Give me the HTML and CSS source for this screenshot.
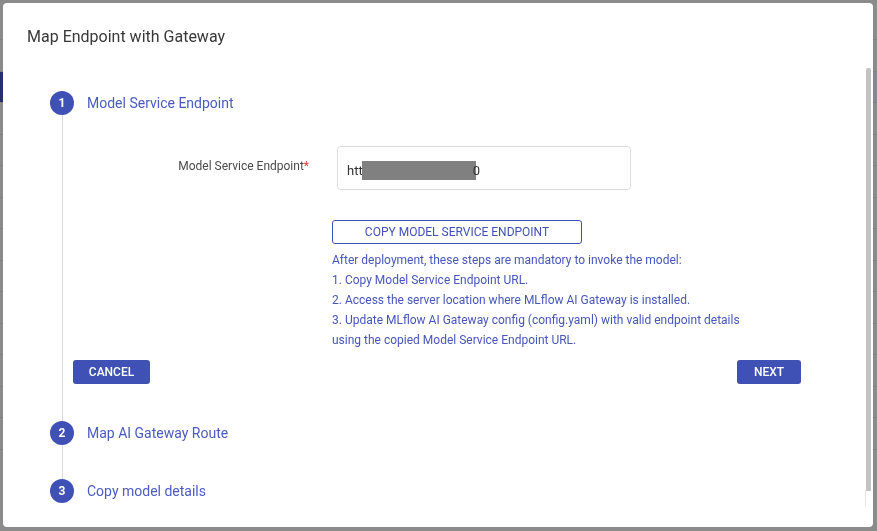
FILE: index.html
```html
<!DOCTYPE html>
<html lang="en">
<head>
<meta charset="utf-8">
<title>Map Endpoint with Gateway</title>
<link rel="stylesheet" href="styles.css">
</head>
<body>
<div class="page">
  <div class="page-top"></div>
  <div class="page-row"></div>
  <div class="page-row active"></div>
  <div class="page-row"></div>
  <div class="page-row"></div>
  <div class="page-row"></div>
  <div class="page-row"></div>
  <div class="page-row"></div>
  <div class="page-row"></div>
  <div class="page-row"></div>
  <div class="page-row"></div>
  <div class="page-row"></div>
  <div class="page-row"></div>
  <div class="page-row"></div>
</div>

<div class="dialog">
  <h2 class="title">Map Endpoint with Gateway</h2>
  <div class="stepper">
    <div class="step-head">
      <span class="step-num">1</span>
      <span class="step-label">Model Service Endpoint</span>
    </div>
    <div class="step-body">
      <div class="form-row">
        <label class="form-label">Model Service Endpoint<span class="req">*</span></label>
        <div class="input"><span>htt</span><span class="redact"></span><span>0</span></div>
      </div>
      <div class="copy-block">
        <button class="btn-outline">COPY MODEL SERVICE ENDPOINT</button>
        <div class="info">
          <p>After deployment, these steps are mandatory to invoke the model:</p>
          <p>1. Copy Model Service Endpoint URL.</p>
          <p>2. Access the server location where MLflow AI Gateway is installed.</p>
          <p>3. Update MLflow AI Gateway config (config.yaml) with valid endpoint details</p>
          <p>using the copied Model Service Endpoint URL.</p>
        </div>
      </div>
      <div class="actions">
        <button class="btn cancel">CANCEL</button>
        <button class="btn next">NEXT</button>
      </div>
    </div>
    <div class="step-head">
      <span class="step-num">2</span>
      <span class="step-label">Map AI Gateway Route</span>
    </div>
    <div class="connector"></div>
    <div class="step-head">
      <span class="step-num">3</span>
      <span class="step-label">Copy model details</span>
    </div>
  </div>
  <div class="scroll-track"></div>
  <div class="scroll-thumb"></div>
</div>
</body>
</html>
```

FILE: styles.css
```css
* { box-sizing: border-box; }

html, body {
  margin: 0;
  padding: 0;
  height: 100%;
}

body {
  background: #8b8b8c;
  font-family: Roboto, "Liberation Sans", Arial, sans-serif;
  overflow: hidden;
}

.page {
  display: flex;
  flex-direction: column;
}

.page-top {
  height: 40px;
  border-bottom: 1px solid #7f8083;
}

.page-row {
  height: 31.5px;
  border-bottom: 1px solid #7f8083;
}

.page-row.active {
  background: linear-gradient(to right, #27306b 0, #27306b 4px, #858690 4px);
}

.dialog {
  position: fixed;
  left: 3px;
  top: 3px;
  width: 870px;
  height: 524px;
  background: #fff;
  border-radius: 4px;
  overflow: hidden;
  display: flex;
  flex-direction: column;
}

.title {
  margin: 0;
  padding: 22px 24px 0 24px;
  font-size: 16px;
  line-height: 24px;
  font-weight: 400;
  color: #383838;
}

.stepper {
  margin-top: 42px;
  padding-left: 47px;
  padding-right: 72px;
  display: flex;
  flex-direction: column;
}

.step-head {
  display: flex;
  align-items: center;
  gap: 13px;
  height: 24px;
}

.step-num {
  width: 24px;
  height: 24px;
  border-radius: 50%;
  background: #3f51b5;
  color: #fff;
  font-size: 12px;
  font-weight: 700;
  display: flex;
  align-items: center;
  justify-content: center;
}

.step-label {
  font-size: 14px;
  color: #4a5bbf;
}

.step-body {
  margin-left: 12px;
  border-left: 1px solid #dadada;
  padding: 31px 0 37px 0;
  display: flex;
  flex-direction: column;
}

.connector {
  margin-left: 12px;
  border-left: 1px solid #dadada;
  height: 34px;
}

.form-row {
  display: grid;
  grid-template-columns: 246px 294px;
  column-gap: 28px;
  align-items: start;
}

.form-label {
  text-align: right;
  font-size: 12px;
  line-height: 16px;
  color: #4a4a4a;
  padding-top: 12px;
}

.req {
  color: #e53935;
}

.input {
  height: 44px;
  border: 1px solid #dcdcdc;
  border-radius: 4px;
  display: flex;
  align-items: center;
  padding-left: 9px;
  padding-top: 4px;
  font-size: 13px;
  color: #333;
}

.redact {
  display: inline-block;
  width: 114px;
  height: 19px;
  background: #808080;
  margin-left: -1px;
  margin-right: -3px;
}

.copy-block {
  margin-top: 30px;
  padding-left: 269px;
  display: flex;
  flex-direction: column;
  align-items: flex-start;
}

.btn-outline {
  width: 250px;
  height: 24px;
  border: 1px solid #3f51b5;
  border-radius: 3px;
  background: #fff;
  color: #3f51b5;
  font-family: inherit;
  font-size: 12px;
  padding: 0;
  cursor: pointer;
}

.info {
  margin-top: 6px;
  font-size: 12px;
  line-height: 20px;
  color: #4656bb;
}

.info p {
  margin: 0;
}

.actions {
  margin-top: 10px;
  display: flex;
  justify-content: space-between;
  padding-left: 10px;
}

.btn {
  height: 24px;
  border: none;
  border-radius: 3px;
  background: #3f51b5;
  color: #fff;
  font-family: inherit;
  font-size: 12px;
  font-weight: 500;
  padding: 0;
  cursor: pointer;
}

.cancel { width: 77px; }
.next { width: 64px; }

.scroll-track {
  position: absolute;
  left: 862px;
  top: 487px;
  width: 1px;
  height: 16px;
  background: #e4e4e4;
}

.scroll-thumb {
  position: absolute;
  left: 863px;
  top: 65px;
  width: 5px;
  height: 423px;
  background: #c2c2c2;
  border-radius: 2px 2px 0 0;
}
```
